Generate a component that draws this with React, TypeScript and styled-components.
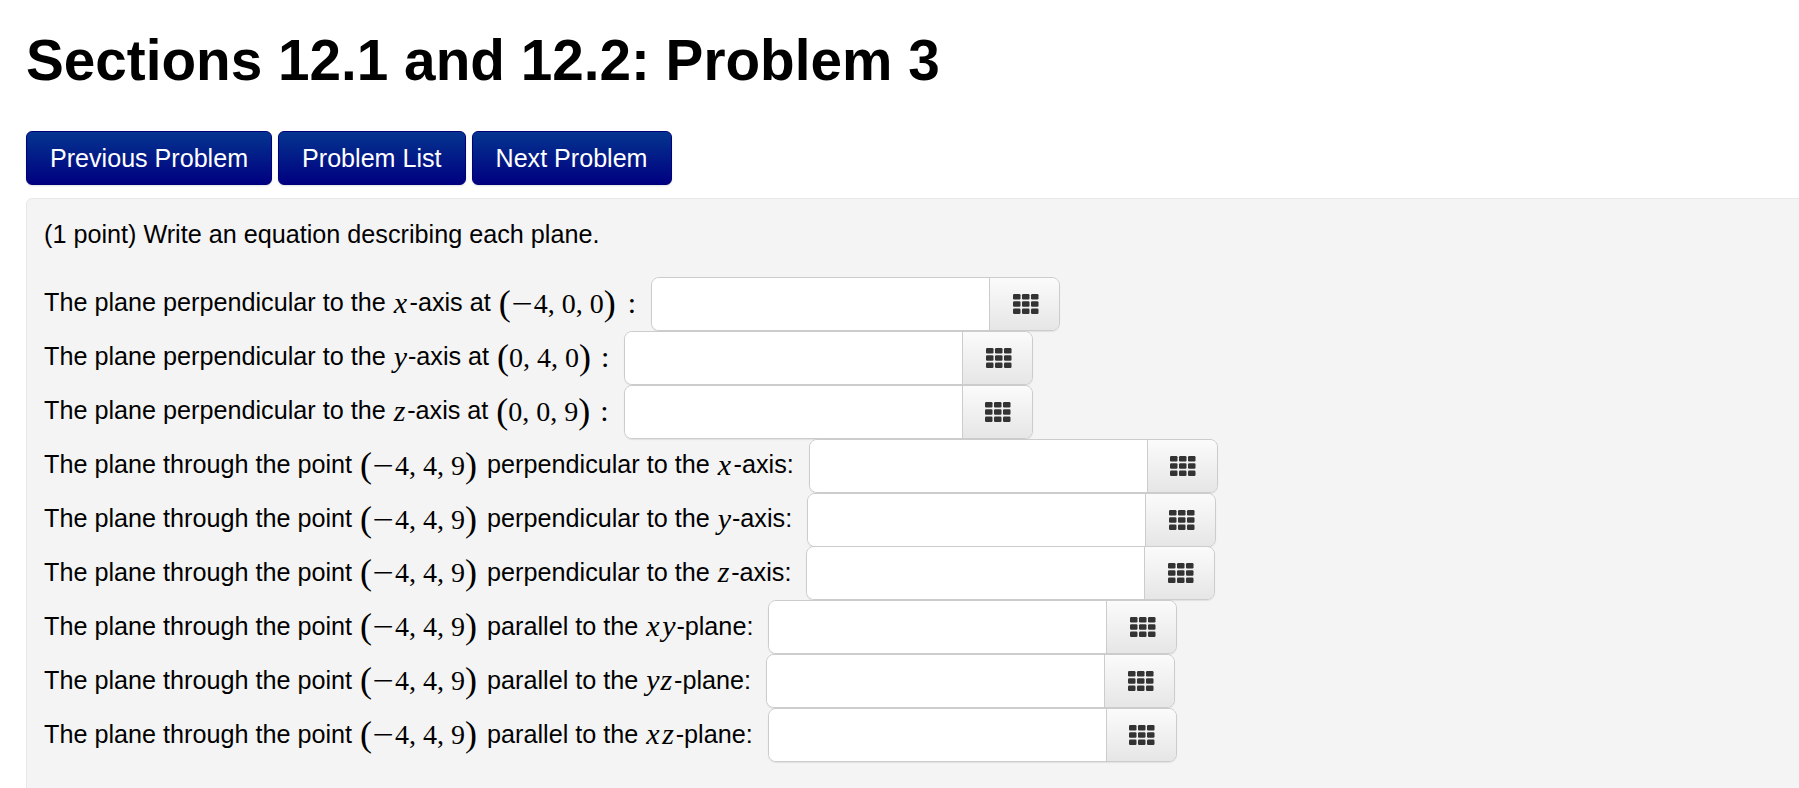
import React from "react";
import styled, { createGlobalStyle } from "styled-components";

const Global = createGlobalStyle`
  html, body { margin: 0; padding: 0; height: 788px; overflow: hidden; background: #fff; }
  body { font-family: "Liberation Sans", Arial, sans-serif; color: #000; }
`;
const Page = styled.div`
  padding: 26px 0 0 26px;
`;
const Title = styled.h1`
  margin: 0;
  height: 70px;
  font-size: 56.7px;
  line-height: 70px;
  font-weight: 700;
`;
const Nav = styled.div`
  display: flex;
  gap: 6px;
  margin-top: 35px;
`;
const NavButton = styled.a`
  display: block;
  height: 54px;
  box-sizing: border-box;
  padding: 0 23px;
  line-height: 52px;
  font-size: 25.1px;
  color: #fff;
  border-radius: 6px;
  border: 1px solid #00007a;
  background: linear-gradient(#04358f, #000080);
  box-shadow: 0 1px 2px rgba(0, 0, 0, 0.12);
`;
const Panel = styled.div`
  margin-top: 13px;
  margin-right: -6px;
  height: 600px;
  box-sizing: border-box;
  padding: 17px 17px;
  background: #f4f4f4;
  border: 1px solid #e8e8e8;
  border-radius: 6px;
`;
const Intro = styled.p`
  margin: 0 0 24px;
  font-size: 25.2px;
  line-height: 36px;
`;
const Row = styled.div`
  display: flex;
  align-items: center;
  height: 53.9px;
  font-size: 25.2px;
  white-space: pre;
`;
const Var = styled.i`
  font-family: "Liberation Serif", "Times New Roman", serif;
  font-size: 30px;
  font-style: italic;
  margin-left: 1px;
`;
const Letter = styled.span<{ $extra: number }>`
  letter-spacing: ${(p) => p.$extra}px;
`;
const Math = styled.span`
  font-family: "Liberation Serif", "Times New Roman", serif;
  font-size: 28px;
  margin: 0 10px 0 8px;
`;
const Minus = styled.span`
  display: inline-block;
  width: 23px;
  text-align: center;
  transform: scaleX(1.35);
`;
const Paren = styled.span`
  font-size: 36px;
  font-weight: 400;
  line-height: 1;
  vertical-align: -2px;
`;
const Colon = styled.span<{ $gap: number }>`
  font-family: "Liberation Serif", "Times New Roman", serif;
  font-size: 30px;
  margin-left: ${(p) => p.$gap}px;
`;
const Group = styled.div`
  display: flex;
  flex: none;
  width: 409px;
  height: 54px;
  margin: 2px 0 0 15px;
  box-sizing: border-box;
  border: 1px solid #ccc;
  border-radius: 8px;
  overflow: hidden;
  box-shadow: 0 1px 1px rgba(0, 0, 0, 0.08);
`;
const Field = styled.div`
  flex: 1;
  background: #fff;
`;
const Addon = styled.div`
  width: 70px;
  box-sizing: border-box;
  padding-left: 2px;
  display: flex;
  align-items: center;
  justify-content: center;
  border-left: 1px solid #ccc;
  background: linear-gradient(#fbfbfb, #e6e6e6);
`;

const Grid = () => (
  <svg width="26" height="20" viewBox="0 0 26 20">
    {[0, 7.25, 14.5].map((y) =>
      [0, 9, 18].map((x) => (
        <rect key={`${x}-${y}`} x={x} y={y} width="7.5" height="5.5" rx="1.2" fill="#333" />
      ))
    )}
  </svg>
);

const EXTRA: Record<string, number> = { x: 2.5, y: 0.9, z: 1.8 };

const V = ({ s }: { s: string }) => (
  <Var>
    {s.split("").map((c, i) => (
      <Letter key={i} $extra={EXTRA[c]}>
        {c}
      </Letter>
    ))}
  </Var>
);

const P = ({ v }: { v: string }) => (
  <Math>
    <Paren>(</Paren>
    {v.startsWith("−") && <Minus>−</Minus>}
    {v.replace("−", "")}
    <Paren>)</Paren>
  </Math>
);

const rows: { pre: string; a?: string; pt: string; mid?: string; v2?: string; end: string; colon?: number }[] = [
  { pre: "The plane perpendicular to the ", a: "x", pt: "−4, 0, 0", end: "-axis at", colon: 2 },
  { pre: "The plane perpendicular to the ", a: "y", pt: "0, 4, 0", end: "-axis at", colon: 0 },
  { pre: "The plane perpendicular to the ", a: "z", pt: "0, 0, 9", end: "-axis at", colon: 0 },
  { pre: "The plane through the point", pt: "−4, 4, 9", mid: "perpendicular to the ", v2: "x", end: "-axis:" },
  { pre: "The plane through the point", pt: "−4, 4, 9", mid: "perpendicular to the ", v2: "y", end: "-axis:" },
  { pre: "The plane through the point", pt: "−4, 4, 9", mid: "perpendicular to the ", v2: "z", end: "-axis:" },
  { pre: "The plane through the point", pt: "−4, 4, 9", mid: "parallel to the ", v2: "xy", end: "-plane:" },
  { pre: "The plane through the point", pt: "−4, 4, 9", mid: "parallel to the ", v2: "yz", end: "-plane:" },
  { pre: "The plane through the point", pt: "−4, 4, 9", mid: "parallel to the ", v2: "xz", end: "-plane:" },
];

export default function App() {
  return (
    <Page>
      <Global />
      <Title>Sections 12.1 and 12.2: Problem 3</Title>
      <Nav>
        <NavButton>Previous Problem</NavButton>
        <NavButton>Problem List</NavButton>
        <NavButton>Next Problem</NavButton>
      </Nav>
      <Panel>
        <Intro>(1 point) Write an equation describing each plane.</Intro>
        {rows.map((r, i) => (
          <Row key={i}>
            <span>{r.pre}</span>
            {r.a && <V s={r.a} />}
            {r.a ? <span>{r.end}</span> : null}
            <P v={r.pt} />
            {r.colon !== undefined && <Colon $gap={r.colon}>:</Colon>}
            {r.mid && <span>{r.mid}</span>}
            {r.v2 && <V s={r.v2} />}
            {r.mid && <span>{r.end}</span>}
            <Group>
              <Field />
              <Addon>
                <Grid />
              </Addon>
            </Group>
          </Row>
        ))}
      </Panel>
    </Page>
  );
}
